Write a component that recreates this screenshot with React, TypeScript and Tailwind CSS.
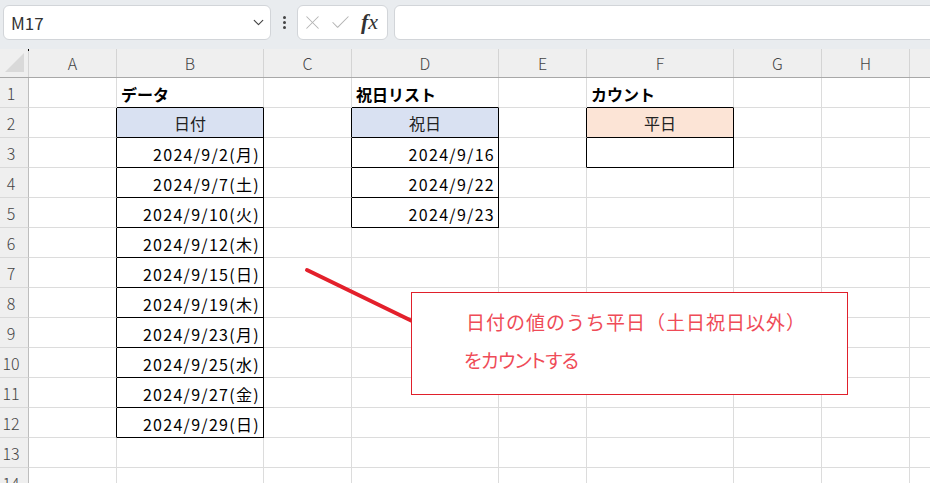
import { ChevronDown, X, Check } from "lucide-react";

type Col = { key: string; w: string };

const columns: Col[] = [
  { key: "A", w: "w-[88px]" },
  { key: "B", w: "w-[147px]" },
  { key: "C", w: "w-[88px]" },
  { key: "D", w: "w-[147px]" },
  { key: "E", w: "w-[88px]" },
  { key: "F", w: "w-[147px]" },
  { key: "G", w: "w-[88px]" },
  { key: "H", w: "w-[88px]" },
];

const dates = [
  "2024/9/2(月)",
  "2024/9/7(土)",
  "2024/9/10(火)",
  "2024/9/12(木)",
  "2024/9/15(日)",
  "2024/9/19(木)",
  "2024/9/23(月)",
  "2024/9/25(水)",
  "2024/9/27(金)",
  "2024/9/29(日)",
];

const holidays = ["2024/9/16", "2024/9/22", "2024/9/23"];

// bordered ranges: column -> [first row, last row]
const ranges: Record<string, [number, number]> = {
  B: [2, 12],
  D: [2, 5],
  F: [2, 3],
};

const inRange = (col: string | undefined, row: number) => {
  if (!col || !ranges[col]) return false;
  const [a, b] = ranges[col];
  return row >= a && row <= b;
};

type Content = { text: string; kind: "bold" | "head" | "value" };

function cellContent(col: string, row: number): Content | null {
  if (row === 1) {
    if (col === "B") return { text: "データ", kind: "bold" };
    if (col === "D") return { text: "祝日リスト", kind: "bold" };
    if (col === "F") return { text: "カウント", kind: "bold" };
  }
  if (row === 2 && (col === "B" || col === "D" || col === "F")) {
    return { text: col === "B" ? "日付" : col === "D" ? "祝日" : "平日", kind: "head" };
  }
  if (col === "B" && row >= 3 && row <= 12) return { text: dates[row - 3], kind: "value" };
  if (col === "D" && row >= 3 && row <= 5) return { text: holidays[row - 3], kind: "value" };
  return null;
}

function Cell({ col, idx, row }: { col: Col; idx: number; row: number }) {
  const next = columns[idx + 1]?.key;
  const right = inRange(col.key, row) || inRange(next, row);
  const bottom = inRange(col.key, row) || inRange(col.key, row + 1);
  const content = cellContent(col.key, row);

  let bg = "bg-white";
  if (row === 2 && (col.key === "B" || col.key === "D")) bg = "bg-[#d9e1f2]";
  if (row === 2 && col.key === "F") bg = "bg-[#fce4d6]";

  return (
    <div
      className={`${col.w} shrink-0 h-[30px] border-r border-b ${
        right ? "border-r-black" : "border-r-[#dcdcdc]"
      } ${bottom ? "border-b-black" : "border-b-[#dcdcdc]"} ${bg} flex items-center text-[16px] text-black`}
    >
      {content?.kind === "bold" && <span className="pl-[4px] pt-[2px] font-bold">{content.text}</span>}
      {content?.kind === "head" && <span className="w-full text-center pt-[1px] text-[#222]">{content.text}</span>}
      {content?.kind === "value" && (
        <span className="w-full text-right pr-[3px] pt-[2px] tracking-[1.3px]">{content.text}</span>
      )}
    </div>
  );
}

export default function App() {
  const rows = Array.from({ length: 14 }, (_, i) => i + 1);

  return (
    <div
      className="relative w-[930px] h-[483px] overflow-hidden bg-white"
      style={{ fontFamily: '"Noto Sans CJK JP", "Noto Sans", sans-serif' }}
    >
      {/* 数式バー */}
      <div className="h-[49px] bg-[#e9ecef] flex items-start pt-[5px] pl-[3px]">
        <div className="w-[268px] h-[35px] bg-white border border-[#d2d5d9] rounded-[6px] flex items-center justify-between pl-[7px] pr-[3px]">
          <span className="text-[17px] text-[#333] pt-[1px]">M17</span>
          <ChevronDown size={17} strokeWidth={1.6} className="text-[#444]" />
        </div>
        <div className="w-[26px] h-[35px] flex flex-col items-center justify-center gap-[2px]">
          <span className="w-[3px] h-[3px] rounded-full bg-[#444]" />
          <span className="w-[3px] h-[3px] rounded-full bg-[#444]" />
          <span className="w-[3px] h-[3px] rounded-full bg-[#444]" />
        </div>
        <div className="w-[91px] h-[35px] bg-white border border-[#d2d5d9] rounded-[6px] flex items-center pl-[3px] gap-[5px]">
          <X size={23} strokeWidth={1.1} className="text-[#b4b4b4]" />
          <Check size={23} strokeWidth={1.1} className="text-[#b4b4b4]" />
          <span
            className="text-[22px] italic text-[#333] ml-[4px] -mt-[2px]"
            style={{ fontFamily: '"Liberation Serif", "DejaVu Serif", serif' }}
          >
            <span className="font-bold">f</span>x
          </span>
        </div>
        <div className="ml-[6px] flex-1 -mr-[10px] h-[35px] bg-white border border-[#d2d5d9] rounded-[6px]" />
      </div>

      {/* 列見出し */}
      <div className="flex h-[29px] bg-[#efefef] border-b border-b-[#a8a8a8]">
        <div className="relative w-[29px] shrink-0 border-r border-r-[#d4d4d4]">
          <div className="absolute left-[5px] bottom-[5px] w-0 h-0 border-l-[19px] border-l-transparent border-b-[19px] border-b-[#d9d9d9]" />
          <div className="absolute right-[-1px] top-0 w-[1px] h-[2px] bg-black" />
        </div>
        {columns.map((c) => (
          <div
            key={c.key}
            className={`${c.w} shrink-0 border-r border-r-[#d4d4d4] flex items-center justify-center text-[16px] text-[#444] font-light`}
          >
            {c.key}
          </div>
        ))}
        <div className="flex-1" />
      </div>

      {/* 行 */}
      {rows.map((r) => (
        <div key={r} className="flex">
          <div className="w-[29px] shrink-0 h-[30px] bg-[#efefef] border-r border-r-[#bdbdbd] border-b border-b-[#d9d9d9] flex items-center justify-center pr-[6px] text-[16px] text-[#444] font-light">
            {r}
          </div>
          {columns.map((c, i) => (
            <Cell key={c.key} col={c} idx={i} row={r} />
          ))}
          <div className="flex-1 h-[30px] border-b border-b-[#dcdcdc]" />
        </div>
      ))}

      {/* 矢印線 */}
      <svg className="absolute left-0 top-0 pointer-events-none" width={930} height={483}>
        <line x1={307} y1={270} x2={412} y2={321} stroke="#e3202b" strokeWidth={4} strokeLinecap="round" />
      </svg>

      {/* テキストボックス */}
      <div className="absolute left-[411px] top-[292px] w-[437px] h-[103px] bg-white border border-[#e0202b] text-[#ef4b57] text-[19px]">
        <div className="pl-[54px] pt-[14px] leading-[30px] tracking-[1px]">日付の値のうち平日（土日祝日以外）</div>
        <div
          className="pl-[52px] pt-[8px] leading-[30px] tracking-[-0.5px]"
          style={{ fontFeatureSettings: '"palt"' }}
        >
          をカウントする
        </div>
      </div>
    </div>
  );
}
